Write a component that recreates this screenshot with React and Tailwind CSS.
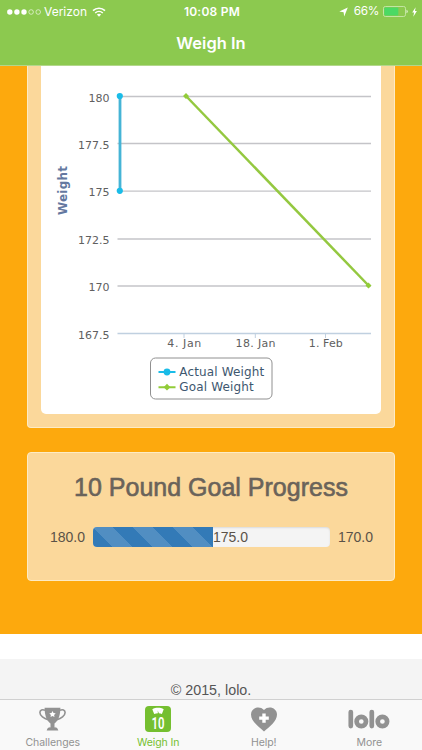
import React from "react";

const gridLines = [
  { y: 30.5, label: "180" },
  { y: 77.5, label: "177.5" },
  { y: 125.2, label: "175" },
  { y: 173, label: "172.5" },
  { y: 220, label: "170" },
  { y: 267.5, label: "167.5" },
];

const dates = [
  { x: 143, label: "4. Jan", width: 34 },
  { x: 214.3, label: "18. Jan", width: 40 },
  { x: 284.5, label: "1. Feb", width: 34 },
];

function StatusBar() {
  return (
    <div className="flex h-[22px] items-center justify-between pt-px pl-[7px] pr-[5px] text-[12px] text-white">
      <div className="flex w-[140px] items-center">
        <svg width="35" height="8" viewBox="0 0 35 8" fill="#fff">
          <circle cx="2.8" cy="4" r="2.7" />
          <circle cx="9.9" cy="4" r="2.7" />
          <circle cx="17" cy="4" r="2.7" />
          <circle cx="24.1" cy="4" r="2.3" fill="none" stroke="#fff" strokeWidth=".6" />
          <circle cx="31.2" cy="4" r="2.3" fill="none" stroke="#fff" strokeWidth=".6" />
        </svg>
        <span className="ml-[2px] text-[12px]">Verizon</span>
        <svg className="ml-[5px]" width="14" height="10" viewBox="0 0 14 10" fill="none" stroke="#fff" strokeWidth="1.6">
          <path d="M1 3.7C4.4.5 9.6.5 13 3.7" />
          <path d="M3.2 6C5.4 4 8.6 4 10.8 6" />
          <path d="M4.9 7.5c1.2-1.1 3-1.1 4.2 0L7 9.7z" fill="#fff" stroke="none" />
        </svg>
      </div>
      <span className="font-semibold tracking-[.25px]">10:08 PM</span>
      <div className="flex w-[140px] items-center justify-end">
        <svg width="9" height="10" viewBox="0 0 9 10" fill="#fff">
          <path d="M8.8.6 5.2 9.4 4.600 5.200.3 4.500z" />
        </svg>
        <span className="ml-[6px] text-[11.8px] tracking-[-.35px]">66%</span>
        <svg className="ml-[4px]" width="25" height="11" viewBox="0 0 25 11">
          <rect x=".5" y=".5" width="22" height="10" rx="1.8" fill="none" stroke="#c9e8ac" strokeWidth=".9" />
          <rect x="1.3" y="1.4" width="14" height="8.2" rx=".8" fill="#4bd964" />
          <path d="M23.6 3.8c1.4.5 1.4 2.9 0 3.4z" fill="#fff" />
        </svg>
        <svg className="ml-[4px]" width="5" height="10" viewBox="0 0 5 10" fill="#fff">
          <path d="M3.6.2.2 5.5h1.9L1.3 9.8 4.9 4H3z" />
        </svg>
      </div>
    </div>
  );
}

function WeightChart() {
  return (
    <svg
      className="block h-[348px] w-[340px] rounded-b-[5px] bg-white [font-family:'DejaVu_Sans',sans-serif]"
      viewBox="0 0 340 348"
    >
      {gridLines.map((line, i) => (
        <g key={line.label}>
          <line
            x1="76.5"
            x2="330"
            y1={line.y}
            y2={line.y}
            stroke={i === gridLines.length - 1 ? "#c0d0e0" : "#c4c4c8"}
            strokeWidth="1.3"
          />
          <text x="68.5" y={line.y + 5} textAnchor="end" fontSize="11" fill="#606060">
            {line.label}
          </text>
        </g>
      ))}
      {dates.map((d) => (
        <g key={d.label}>
          <line x1={d.x} x2={d.x} y1="267.5" y2="272" stroke="#c0d0e0" />
          <text
            x={d.x + 0.3}
            y="281.3"
            textAnchor="middle"
            fontSize="11"
            textLength={d.width}
            fill="#606060"
          >
            {d.label}
          </text>
        </g>
      ))}
      <text
        transform="translate(25.5 124.5) rotate(-90)"
        textAnchor="middle"
        fontSize="12"
        fontWeight="700"
        textLength="49"
        fill="#6478a0"
      >
        Weight
      </text>

      <line x1="79" x2="79" y1="30" y2="125" stroke="#45b4d6" strokeWidth="2.8" />
      <circle cx="78.8" cy="30" r="3.1" fill="#1abce8" />
      <circle cx="78.8" cy="124.8" r="3.1" fill="#1abce8" />

      <path d="M145 30 327.5 219.5" stroke="#94c840" strokeWidth="2.5" />
      <path d="m145 27 3 3-3 3-3-3zM327.5 216.5l3 3-3 3-3-3z" fill="#92cc38" />

      <rect x="109.5" y="292" width="121.5" height="41" rx="5" fill="#fff" stroke="#909090" />
      <path d="M117.5 306h17" stroke="#1abce8" strokeWidth="2" />
      <circle cx="126" cy="306" r="3.4" fill="#1abce8" />
      <path d="M117.5 321.2h17" stroke="#92cc38" strokeWidth="2" />
      <path d="m126 317.8 3.4 3.4-3.4 3.4-3.4-3.4z" fill="#92cc38" />
      <text x="138.3" y="310" fontSize="12" textLength="85" fill="#3e576f">
        Actual Weight
      </text>
      <text x="138.3" y="325.3" fontSize="12" textLength="74.5" fill="#3e576f">
        Goal Weight
      </text>
    </svg>
  );
}

function GoalProgress() {
  return (
    <div className="mt-[24px] ml-[27px] h-[129px] w-[368px] rounded-[4px] border border-[#fdebc4] bg-[#fbd89b] [font-family:'Liberation_Sans',Arial,sans-serif]">
      <h2 className="mt-[18px] text-center text-[25px] leading-8 whitespace-nowrap text-[#6a635a] [-webkit-text-stroke:.6px_#6a635a]">
        10 Pound Goal Progress
      </h2>
      <div className="mt-[24px] flex h-[20px] items-center justify-between pr-[21px] pl-[22px] text-[14px] text-[#5a5248]">
        <span>180.0</span>
        <div className="flex h-[20px] w-[237px] items-center overflow-hidden rounded-[4px] bg-[#f4f4f4] shadow-[inset_0_1px_2px_rgba(0,0,0,.1)]">
          <div className="h-full w-[120px] bg-[#337ab7] bg-[linear-gradient(45deg,rgba(255,255,255,.15)_25%,transparent_25%,transparent_50%,rgba(255,255,255,.15)_50%,rgba(255,255,255,.15)_75%,transparent_75%,transparent)] bg-[length:40px_40px]" />
          <span>175.0</span>
        </div>
        <span>170.0</span>
      </div>
    </div>
  );
}

function Tab({ label, active, children }) {
  return (
    <div
      className={`flex flex-1 flex-col items-center text-[10.5px] ${
        active ? "text-[#75bf30]" : "text-[#929292]"
      }`}
    >
      <div className="flex h-[36px] items-center pt-[2px]">{children}</div>
      <span className="leading-[14px] tracking-[-.08px]">{label}</span>
    </div>
  );
}

function TabBar() {
  return (
    <nav className="flex h-[51px] shrink-0 border-t border-[#d0d0d0] bg-[#f9f9f9]">
      <Tab label="Challenges">
        <svg width="27" height="25" viewBox="0 0 27 25" fill="#929292">
          <path d="M5.600.800h15.800c0 7.200-1.800 12.700-5.900 15.600v3.100c1.800.4 3.300 1.500 3.800 4H7.700c.5-2.500 2-3.600 3.800-4v-3.100C7.400 13.500 5.600 8 5.600.800z" />
          <path d="M6 3.300C3.500 2.100.9 3 .9 5.600c0 3.200 4.100 6.100 8.100 7M21 3.300c2.500-1.200 5.100-.3 5.100 2.300 0 3.200-4.100 6.100-8.100 7" fill="none" stroke="#929292" strokeWidth="1.600" />
          <path d="m13.500 4 1 2 2.200.3-1.600 1.600.4 2.200-2-1.100-2 1.100.4-2.200-1.600-1.600 2.200-.3z" fill="#fff" />
          <path d="M8.500 19.900h3M15.500 19.900h3" stroke="#f9f9f9" strokeWidth="1" />
        </svg>
      </Tab>
      <Tab label="Weigh In" active>
        <svg width="26" height="26" viewBox="0 0 26 26">
          <rect width="26" height="26" rx="4" fill="#75bf30" />
          <path d="M7.300 3.200c3.400-1.900 8-1.900 11.400 0l-1.800 4.900c-1.100-.6-2-.9-3-.9l-1.200-2.600.2 2.600c-1.300 0-2.500.3-3.700.9z" fill="#fff" />
          <text
            x="13"
            y="23"
            textAnchor="middle"
            fontSize="16.500"
            fontWeight="600"
            textLength="13"
            lengthAdjust="spacingAndGlyphs"
            fill="#fff"
            className="[font-family:Roboto,sans-serif]"
          >
            10
          </text>
        </svg>
      </Tab>
      <Tab label="Help!">
        <svg width="26" height="25" viewBox="0 0 26 25">
          <path d="M13 24.500C8 20 0 14.500 0 7.500 0 .8 8.500-2 13 3c4.500-5 13-2.200 13 4.500 0 7-8 12.500-13 17z" fill="#929292" />
          <path d="M11.300 6.500h3.400v3h3.100v3.300h-3.100v3h-3.400v-3H8.200V9.500h3.100z" fill="#fff" />
        </svg>
      </Tab>
      <Tab label="More">
        <svg width="42" height="20" viewBox="0 0 42 20" fill="none" stroke="#929292" strokeWidth="4.700" strokeLinecap="round">
          <path d="M2.800 3v14.100M23.800 3v14.100" />
          <circle cx="13.300" cy="12.500" r="4.700" />
          <circle cx="34.400" cy="12.500" r="4.700" />
        </svg>
      </Tab>
    </nav>
  );
}

export default function App() {
  return (
    <div className="flex h-[750px] w-[422px] flex-col overflow-hidden bg-white [font-family:Inter,sans-serif]">
      <header className="h-[66px] shrink-0 border-b border-[#b3d78b] bg-[#8cc94f]">
        <StatusBar />
        <h1 className="mt-[9px] text-center text-[16.500px] leading-6 font-semibold text-white">
          Weigh In
        </h1>
      </header>
      <main className="h-[568px] shrink-0 bg-[#fda90d]">
        <div className="ml-[27px] h-[362px] w-[368px] rounded-b-[4px] border border-t-0 border-[#fdebc4] bg-[#fbd89b] pl-[13px]">
          <WeightChart />
        </div>
        <GoalProgress />
      </main>
      <footer className="mt-[25px] flex h-[40px] shrink-0 items-end justify-center bg-[#f4f4f4] text-[14.300px] leading-[18px] text-[#555] [font-family:'Liberation_Sans',Arial,sans-serif]">
        © 2015, lolo.
      </footer>
      <TabBar />
    </div>
  );
}
